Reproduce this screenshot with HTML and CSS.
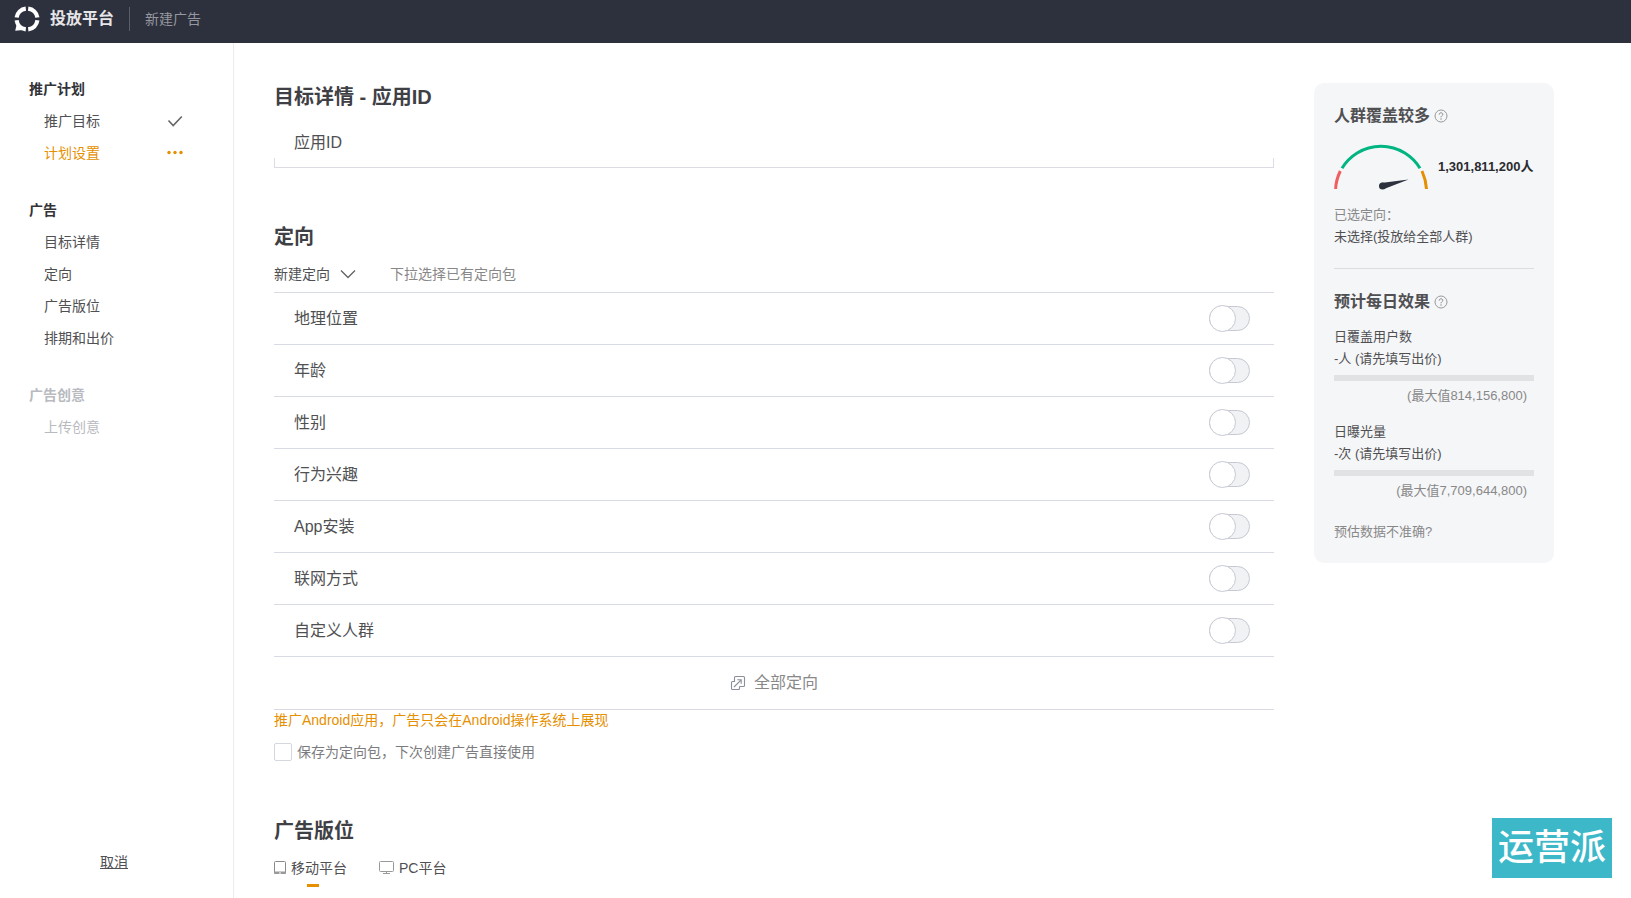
FILE: index.html
```html
<!DOCTYPE html>
<html lang="zh-CN">
<head>
<meta charset="utf-8">
<title>投放平台 - 新建广告</title>
<link rel="stylesheet" href="styles.css">
</head>
<body>
<svg class="sprite" aria-hidden="true">
  <symbol id="help" viewBox="0 0 14 14">
    <circle cx="7" cy="7" r="6" fill="none" stroke="#999" stroke-width="1"/>
    <path d="M5.2 5.6C5.2 4.4 6 3.8 7 3.8s1.8.7 1.8 1.6C8.800 6.700 7 6.800 7 8.300" fill="none" stroke="#888" stroke-width="1"/>
    <circle cx="7" cy="10" r=".7" fill="#888"/>
  </symbol>
</svg>
<header class="topbar">
  <svg class="logo" viewBox="0 0 26 26" aria-hidden="true">
    <path d="M2.600 11.500A10.500 10.500 0 0 1 11.800 2.600M14.200 2.600A10.500 10.500 0 0 1 23.400 11.500M23.400 14.300A10.500 10.500 0 0 1 14.200 23.400M11.800 23.400A10.500 10.500 0 0 1 2.600 14.300" fill="none" stroke="#fff" stroke-width="4.200"/>
    <path d="M3 17L1.200 24.800L9 24z" fill="#fff"/>
  </svg>
  <span class="brand">投放平台</span>
  <span class="crumb">新建广告</span>
</header>
<div class="page">
  <aside class="sidebar">
    <nav class="steps">
      <section class="group">
        <h2 class="group-title">推广计划</h2>
        <a class="step" href="#goal">推广目标
          <svg class="state" viewBox="0 0 16 14" aria-hidden="true"><path d="M1.500 6.500L6.200 11.500L14.800 2.500" fill="none" stroke="#666" stroke-width="1.600"/></svg>
        </a>
        <a class="step current" href="#plan">计划设置
          <svg class="state" viewBox="0 0 16 14" aria-hidden="true"><g fill="#e68f00"><circle cx="2" cy="6.500" r="1.700"/><circle cx="8" cy="6.500" r="1.700"/><circle cx="14" cy="6.500" r="1.700"/></g></svg>
        </a>
      </section>
      <section class="group">
        <h2 class="group-title">广告</h2>
        <a class="step" href="#detail">目标详情</a>
        <a class="step" href="#targeting">定向</a>
        <a class="step" href="#placement">广告版位</a>
        <a class="step" href="#bid">排期和出价</a>
      </section>
      <section class="group disabled">
        <h2 class="group-title">广告创意</h2>
        <a class="step">上传创意</a>
      </section>
    </nav>
    <a class="cancel" href="#cancel">取消</a>
  </aside>
  <main class="content">
    <section class="block" id="detail">
      <h1 class="title">目标详情 - 应用ID</h1>
      <div class="field-name">应用ID</div>
      <div class="field-base"></div>
    </section>
    <section class="block" id="targeting">
      <h1 class="title">定向</h1>
      <div class="picker">
        <div class="select-wrap">
          <select class="select" aria-label="定向方式"><option>新建定向</option></select>
          <svg class="chevron" viewBox="0 0 16 10" aria-hidden="true"><path d="M1 1.500L8 8.500L15 1.500" fill="none" stroke="#666" stroke-width="1.400"/></svg>
        </div>
        <span class="hint">下拉选择已有定向包</span>
      </div>
      <div class="options">
        <label class="option">地理位置<input class="switch" type="checkbox"></label>
        <label class="option">年龄<input class="switch" type="checkbox"></label>
        <label class="option">性别<input class="switch" type="checkbox"></label>
        <label class="option">行为兴趣<input class="switch" type="checkbox"></label>
        <label class="option">App安装<input class="switch" type="checkbox"></label>
        <label class="option">联网方式<input class="switch" type="checkbox"></label>
        <label class="option">自定义人群<input class="switch" type="checkbox"></label>
        <button class="all" type="button">
          <svg class="all-icon" viewBox="0 0 16 16" aria-hidden="true"><g fill="none" stroke="#8b8f99" stroke-width="1.100"><path d="M4.500 7V2.500a1 1 0 0 1 1-1h8a1 1 0 0 1 1 1v8a1 1 0 0 1-1 1H9.500"/><path d="M4.500 6.500h-2a1 1 0 0 0-1 1v6a1 1 0 0 0 1 1h6a1 1 0 0 0 1-1v-2"/><path d="M4 12L11.200 4.800M7.300 4.800h3.900v3.900"/></g></svg>
          全部定向
        </button>
      </div>
      <p class="notice">推广Android应用，广告只会在Android操作系统上展现</p>
      <label class="save"><input class="check" type="checkbox">保存为定向包，下次创建广告直接使用</label>
    </section>
    <section class="block" id="placement">
      <h1 class="title">广告版位</h1>
      <div class="tabs">
        <button class="tab active" type="button">
          <svg class="mobile" viewBox="0 0 12 14" aria-hidden="true"><rect x=".5" y=".5" width="11" height="12" rx="1" fill="none" stroke="#888"/><path d="M0 10.500h12V12a1 1 0 0 1-1 1H1a1 1 0 0 1-1-1z" fill="#999"/><path d="M5 12h2" stroke="#fff"/></svg>
          移动平台
        </button>
        <button class="tab" type="button">
          <svg class="pc" viewBox="0 0 15 14" aria-hidden="true"><rect x=".5" y=".5" width="14" height="10" rx="1" fill="none" stroke="#999"/><path d="M7.500 10.500v2M4 12.500h7" stroke="#999" fill="none"/></svg>
          PC平台
        </button>
      </div>
    </section>
  </main>
  <aside class="estimate">
    <h2 class="est-title">人群覆盖较多<svg class="help"><use href="#help"/></svg></h2>
    <div class="reach">
      <svg class="gauge" viewBox="0 0 94 46" aria-hidden="true">
        <g fill="none" stroke-width="3">
          <path d="M1.600 45Q2 36 6.300 27" stroke="#f05f5f"/>
          <path d="M8 24.300A45.500 45.500 0 0 1 86 24.300" stroke="#00b582"/>
          <path d="M88 27Q92 36 92.500 45" stroke="#e68f00"/>
        </g>
        <path d="M47 39L74.500 35.500L50 45z" fill="#2d303d"/>
        <circle cx="48.500" cy="42" r="3.500" fill="#2d303d"/>
      </svg>
      <strong class="count">1,301,811,200人</strong>
    </div>
    <div class="muted">已选定向：</div>
    <div>未选择(投放给全部人群)</div>
    <hr class="rule">
    <h2 class="est-title">预计每日效果<svg class="help"><use href="#help"/></svg></h2>
    <div class="metric">
      <div>日覆盖用户数</div>
      <div>-人 (请先填写出价)</div>
      <div class="bar"></div>
      <div class="max">(最大值814,156,800)</div>
    </div>
    <div class="metric">
      <div>日曝光量</div>
      <div>-次 (请先填写出价)</div>
      <div class="bar"></div>
      <div class="max">(最大值7,709,644,800)</div>
    </div>
    <a class="feedback" href="#feedback">预估数据不准确?</a>
  </aside>
</div>
<div class="badge">运营派</div>
</body>
</html>
```
FILE: styles.css
```css
* { box-sizing: border-box; }
body {
  margin: 0;
  min-height: 100vh;
  display: flex;
  flex-direction: column;
  background: #fff;
  color: #505053;
  font: 14px/20px "Liberation Sans", "Noto Sans CJK SC", sans-serif;
}
h1, h2, p { margin: 0; }
a { color: inherit; text-decoration: none; }
button, select, input { font: inherit; color: inherit; margin: 0; }
button { border: 0; background: none; padding: 0; cursor: pointer; }
svg { flex: none; display: block; }
.sprite { position: absolute; width: 0; height: 0; }

.topbar {
  height: 43px;
  padding: 0 14px 6px;
  display: flex;
  align-items: center;
  background: #2d303d;
}
.logo { width: 26px; height: 26px; }
.brand {
  margin-left: 10px;
  padding-right: 15px;
  border-right: 1px solid #5a5d69;
  color: #e6e6e8;
  font-size: 16px;
  line-height: 24px;
  font-weight: 700;
}
.crumb { margin-left: 15px; color: #95979e; }

.page { flex: 1; display: flex; align-items: stretch; }
.sidebar {
  width: 234px;
  flex: none;
  padding: 30px 0 20px 29px;
  border-right: 1px solid #ebebf0;
  display: flex;
  flex-direction: column;
}
.steps { flex: 1; }
.group { margin-bottom: 25px; }
.group-title { font-size: 14px; line-height: 32px; color: #333338; }
.step {
  display: flex;
  align-items: center;
  justify-content: space-between;
  padding: 0 50px 0 15px;
  line-height: 32px;
}
.state { width: 16px; height: 14px; }
.current { color: #e68f00; }
.disabled, .disabled .group-title { color: #b8babf; }
.cancel { align-self: flex-start; margin-left: 71px; line-height: 32px; text-decoration: underline; }

.content { flex: 1; min-width: 0; padding: 40px 0 8px 40px; }
.block + .block { margin-top: 55px; }
.title { font-size: 20px; line-height: 28px; color: #3f4045; }
.field-name { margin: 20px 0 3px; padding-left: 20px; font-size: 16px; line-height: 24px; }
.field-base { height: 10px; border: 1px solid #dcdde4; border-top: 0; }
.picker { display: flex; align-items: center; height: 36px; margin-top: 5px; gap: 34px; }
.select-wrap { display: flex; align-items: center; gap: 10px; }
.select { appearance: none; border: 0; padding: 0; background: none; }
.chevron { width: 16px; height: 10px; }
.hint { color: #888; }
.options { border-top: 1px solid #d9dbe4; }
.option {
  display: flex;
  align-items: center;
  justify-content: space-between;
  height: 52px;
  padding: 0 24px 0 20px;
  border-bottom: 1px solid #d9dbe4;
  font-size: 16px;
}
.switch {
  appearance: none;
  position: relative;
  width: 41px;
  height: 25px;
  border: 1px solid #c6c9d3;
  border-radius: 13px;
  background: #f1f2f4;
}
.switch::before {
  content: "";
  position: absolute;
  box-sizing: border-box;
  left: -1px;
  top: -2px;
  width: 27px;
  height: 27px;
  border: 1px solid #c6c9d3;
  border-radius: 50%;
  background: #fff;
}
.switch:checked::before { left: 13px; }
.all {
  display: flex;
  width: 100%;
  height: 53px;
  align-items: center;
  justify-content: center;
  gap: 8px;
  border-bottom: 1px solid #d9dbe4;
  font-size: 16px;
  color: #888;
}
.all-icon { width: 16px; height: 16px; }
.notice { color: #e68f00; }
.save { display: flex; align-items: center; gap: 5px; margin-top: 12px; color: #7c7c80; }
.check {
  appearance: none;
  width: 18px;
  height: 18px;
  border: 1px solid #d5d7e0;
  border-radius: 2px;
  background: #fff;
}
.tabs { display: flex; gap: 32px; margin-top: 9px; }
.tab {
  position: relative;
  display: flex;
  align-items: center;
  gap: 5px;
  height: 28px;
}
.active::after {
  content: "";
  position: absolute;
  top: 30px;
  left: calc(50% - 4px);
  width: 12px;
  height: 3px;
  background: #e68f00;
}
.mobile { width: 12px; height: 14px; }
.pc { width: 15px; height: 14px; }

.estimate {
  width: 240px;
  flex: none;
  align-self: flex-start;
  margin: 40px 77px 20px 40px;
  padding: 20px;
  border-radius: 10px;
  background: #f5f6f8;
  font-size: 13px;
  line-height: 22px;
}
.est-title { display: flex; align-items: center; gap: 4px; font-size: 16px; line-height: 26px; }
.help { width: 14px; height: 14px; }
.reach { display: flex; align-items: center; gap: 10px; margin: 15px 0 14px; white-space: nowrap; }
.gauge { width: 94px; height: 46px; }
.count { color: #2b2b30; }
.muted { color: #888; }
.rule { height: 1px; margin: 20px 0; border: 0; background: #dcdde0; }
.est-title + .metric { margin-top: 11px; }
.metric { margin-top: 14px; }
.bar { height: 6px; margin: 5px 0 4px; background: #e1e2e4; }
.max { padding-right: 7px; text-align: right; color: #888; }
.feedback { display: block; margin-top: 19px; color: #888; }

.badge {
  position: fixed;
  right: 19px;
  bottom: 20px;
  padding: 0 6px;
  background: #3cb8c9;
  color: #fff;
  font-size: 36px;
  font-weight: 500;
  line-height: 60px;
}
```
